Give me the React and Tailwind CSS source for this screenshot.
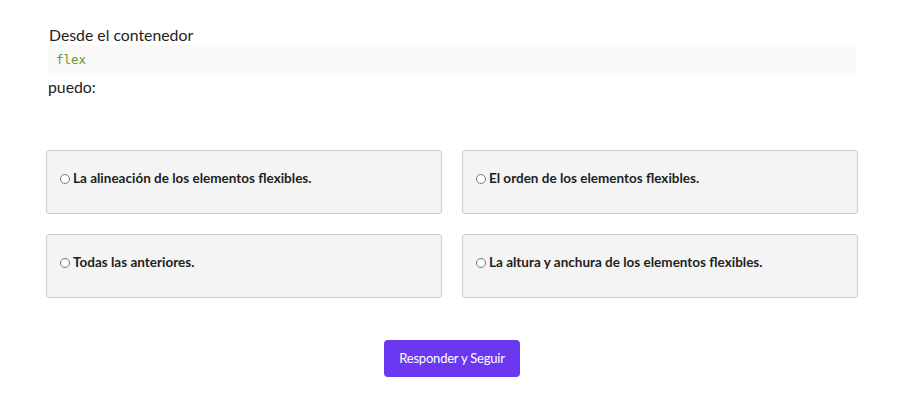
import React from 'react';

const OPTIONS = [
  'La alineación de los elementos flexibles.',
  'El orden de los elementos flexibles.',
  'Todas las anteriores.',
  'La altura y anchura de los elementos flexibles.',
];

function Option({ text }) {
  return (
    <label className="flex items-center h-[64px] pl-[13px] pr-[14px] pb-[7px] bg-[#f4f4f4] border border-[#cfcfcf] rounded-[3px] cursor-pointer">
      <span className="w-[10px] h-[10px] rounded-full border border-[#777] bg-white mr-[3px] shrink-0" />
      <span className="text-[13.5px] font-bold text-[#1f1f1f]">{text}</span>
    </label>
  );
}

export default function App() {
  return (
    <div className="min-h-[406px] bg-white font-['Lato','Liberation_Sans',sans-serif] text-[#222]">
      <div className="ml-[46px] w-[812px] pt-[25px]">
        <div className="pl-[3px] text-[15.8px] leading-[20px]">Desde el contenedor</div>
        <div className="ml-[2px] mr-[2px] h-[30px] bg-[#f9f9f9] flex items-center px-[8px] font-['DejaVu_Sans_Mono',monospace] text-[12.5px] text-[#5c9a34]">
          flex
        </div>
        <div className="pl-[2px] pt-[2px] text-[15.8px] leading-[20px]">puedo:</div>

        <div className="grid grid-cols-2 gap-[20px] mt-[53px]">
          {OPTIONS.map((o) => (
            <Option key={o} text={o} />
          ))}
        </div>

        <div className="flex justify-center mt-[42px]">
          <button className="w-[136px] h-[37px] bg-[#6a38f0] text-white text-[13px] tracking-[-0.2px] rounded-[4px]">
            Responder y Seguir
          </button>
        </div>
      </div>
    </div>
  );
}
